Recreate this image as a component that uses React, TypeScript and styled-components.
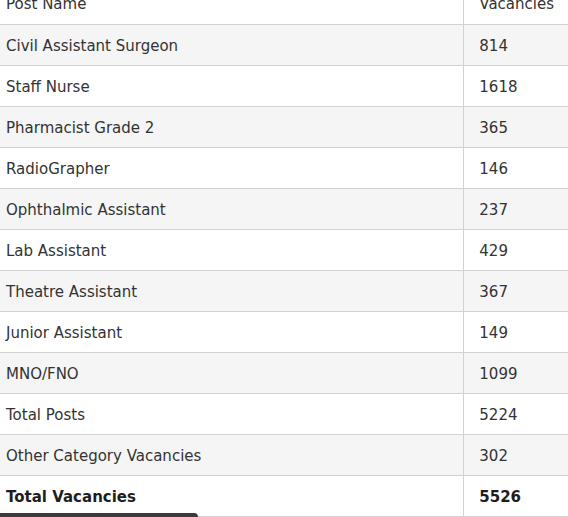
import React from "react";
import styled, { createGlobalStyle } from "styled-components";

const Global = createGlobalStyle`
  html, body { margin: 0; padding: 0; background: #fff; overflow: hidden; }
  body { font-family: "DejaVu Sans", Verdana, sans-serif; }
`;

const Page = styled.div`
  position: relative;
  width: 568px;
  height: 517px;
  overflow: hidden;
`;

const Scroller = styled.div`
  margin-top: -17px;
`;

const Table = styled.table`
  width: 100%;
  border-collapse: collapse;
  font-size: 15px;
  color: #333;
`;

const Row = styled.tr<{ $shaded?: boolean }>`
  background: ${(p) => (p.$shaded ? "#f5f5f5" : "#fff")};
  border-bottom: 1px solid #d2d2d2;
`;

const NameCell = styled.td<{ $bold?: boolean }>`
  width: 464px;
  height: 41px;
  box-sizing: border-box;
  padding: 2px 5px 0 6px;
  line-height: 20px;
  border-right: 1px solid #d2d2d2;
  font-weight: ${(p) => (p.$bold ? 700 : 400)};
  color: ${(p) => (p.$bold ? "#1e1e1e" : "#333")};
  white-space: nowrap;
`;

const ValueCell = styled.td<{ $bold?: boolean }>`
  height: 41px;
  box-sizing: border-box;
  padding: 2px 14px 0 15px;
  line-height: 20px;
  font-weight: ${(p) => (p.$bold ? 700 : 400)};
  color: ${(p) => (p.$bold ? "#1e1e1e" : "#333")};
  white-space: nowrap;
`;

const ScrollThumb = styled.div`
  position: absolute;
  left: 0;
  bottom: 0;
  width: 198px;
  height: 4px;
  background: #3a3a3a;
  border-top-right-radius: 4px;
`;

const rows: [string, string][] = [
  ["Civil Assistant Surgeon", "814"],
  ["Staff Nurse", "1618"],
  ["Pharmacist Grade 2", "365"],
  ["RadioGrapher", "146"],
  ["Ophthalmic Assistant", "237"],
  ["Lab Assistant", "429"],
  ["Theatre Assistant", "367"],
  ["Junior Assistant", "149"],
  ["MNO/FNO", "1099"],
  ["Total Posts", "5224"],
  ["Other Category Vacancies", "302"],
];

export default function App() {
  return (
    <Page>
      <Global />
      <Scroller>
        <Table>
          <tbody>
            <Row>
              <NameCell>Post Name</NameCell>
              <ValueCell>Vacancies</ValueCell>
            </Row>
            {rows.map(([name, value], i) => (
              <Row key={name} $shaded={i % 2 === 0}>
                <NameCell>{name}</NameCell>
                <ValueCell>{value}</ValueCell>
              </Row>
            ))}
            <Row>
              <NameCell $bold>Total Vacancies</NameCell>
              <ValueCell $bold>5526</ValueCell>
            </Row>
          </tbody>
        </Table>
      </Scroller>
      <ScrollThumb />
    </Page>
  );
}
